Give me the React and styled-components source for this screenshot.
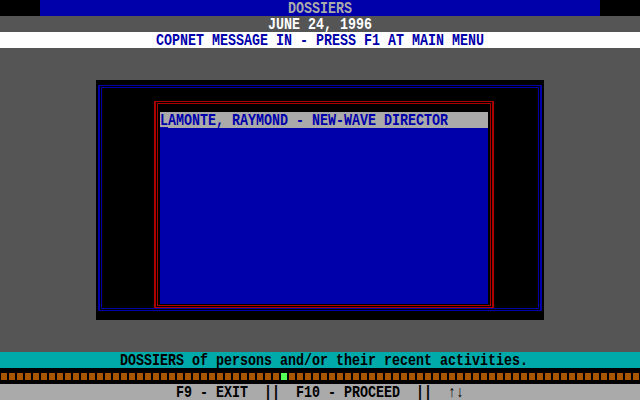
import React from 'react';
import styled, { createGlobalStyle } from 'styled-components';

const GlobalStyle = createGlobalStyle`
  html, body {
    margin: 0;
    padding: 0;
    background: #555555;
  }
  body {
    width: 640px;
    height: 400px;
    overflow: hidden;
  }
`;

const Screen = styled.div`
  display: flex;
  flex-direction: column;
  width: 640px;
  height: 400px;
  background: #555555;
`;

// 8x16 text cells, like the VGA text mode font (tall, narrow glyphs)
const Label = styled.span`
  display: inline-block;
  height: 13px;
  font-family: "Liberation Mono", "DejaVu Sans Mono", monospace;
  font-size: 13.333px;
  font-weight: bold;
  line-height: 13px;
  white-space: pre;
  transform: scaleY(1.2);
`;

const Hotkey = styled.span`
  text-decoration: underline;
  text-underline-offset: 2px;
`;

const Bar = styled.div`
  display: flex;
  justify-content: center;
  align-items: center;
  height: 16px;
  padding-left: ${(props) => props.$shift || 0}px;
  background: ${(props) => props.$bg};
  color: ${(props) => props.$fg};
`;

const TitleRow = styled.div`
  height: 16px;
  padding: 0 40px;
  background: #000000;
`;

const Main = styled.div`
  flex: 1;
  display: flex;
  justify-content: center;
  padding-top: 32px;
`;

const Panel = styled.div`
  width: 448px;
  height: 240px;
  box-sizing: border-box;
  padding: 5px 2px 0 2px;
  background: #000000;
`;

const FrameOuter = styled.div`
  box-sizing: border-box;
  width: ${(props) => props.$w}px;
  height: ${(props) => props.$h}px;
  margin: ${(props) => props.$margin || 0};
  border-style: solid;
  border-color: ${(props) => props.$color};
  border-width: 1px 2px;
  padding: 1px;
`;

const FrameInner = styled.div`
  box-sizing: border-box;
  height: 100%;
  border: 1px solid ${(props) => props.$color};
  padding: ${(props) => props.$pad || 0};
`;

const List = styled.div`
  height: 192px;
  background: #0000aa;
`;

const Row = styled.div`
  display: flex;
  align-items: center;
  height: 16px;
  background: ${(props) => (props.$selected ? '#aaaaaa' : 'transparent')};
  color: #0000aa;
`;

const Ticker = styled.div`
  display: flex;
  gap: 2px;
  height: 16px;
  box-sizing: border-box;
  padding: 5px 0 0 1px;
  background: #000000;
  overflow: hidden;
`;

const Tick = styled.div`
  flex: none;
  width: 6px;
  height: 7px;
  background: ${(props) => (props.$on ? '#55ff55' : '#aa5500')};
`;

const ticks = Array.from({ length: 80 }, (_, i) => i);

const App = () => (
  <Screen>
    <GlobalStyle />
    <TitleRow>
      <Bar $bg="#0000aa" $fg="#aaaaaa">
        <Label>DOSSIERS</Label>
      </Bar>
    </TitleRow>
    <Bar $bg="#555555" $fg="#ffffff">
      <Label>JUNE 24, 1996</Label>
    </Bar>
    <Bar $bg="#ffffff" $fg="#0000aa">
      <Label>COPNET MESSAGE IN - PRESS F1 AT MAIN MENU</Label>
    </Bar>
    <Main>
      <Panel>
        <FrameOuter $color="#0000aa" $w={444} $h={226}>
          <FrameInner $color="#0000aa">
            <FrameOuter $color="#aa0000" $w={340} $h={207} $margin="13px 0 0 52px">
              <FrameInner $color="#aa0000" $pad="8px 2px 1px 2px">
                <List>
                  <Row $selected>
                    <Label>
                      <Hotkey>L</Hotkey>AMONTE, RAYMOND - NEW-WAVE DIRECTOR
                    </Label>
                  </Row>
                </List>
              </FrameInner>
            </FrameOuter>
          </FrameInner>
        </FrameOuter>
      </Panel>
    </Main>
    <Bar $bg="#00aaaa" $fg="#000000" $shift={8}>
      <Label>DOSSIERS of persons and/or their recent activities.</Label>
    </Bar>
    <Ticker>
      {ticks.map((i) => (
        <Tick key={i} $on={i === 35} />
      ))}
    </Ticker>
    <Bar $bg="#aaaaaa" $fg="#000000">
      <Label>F9 - EXIT  ||  F10 - PROCEED  ||  ↑↓</Label>
    </Bar>
  </Screen>
);

export default App;
